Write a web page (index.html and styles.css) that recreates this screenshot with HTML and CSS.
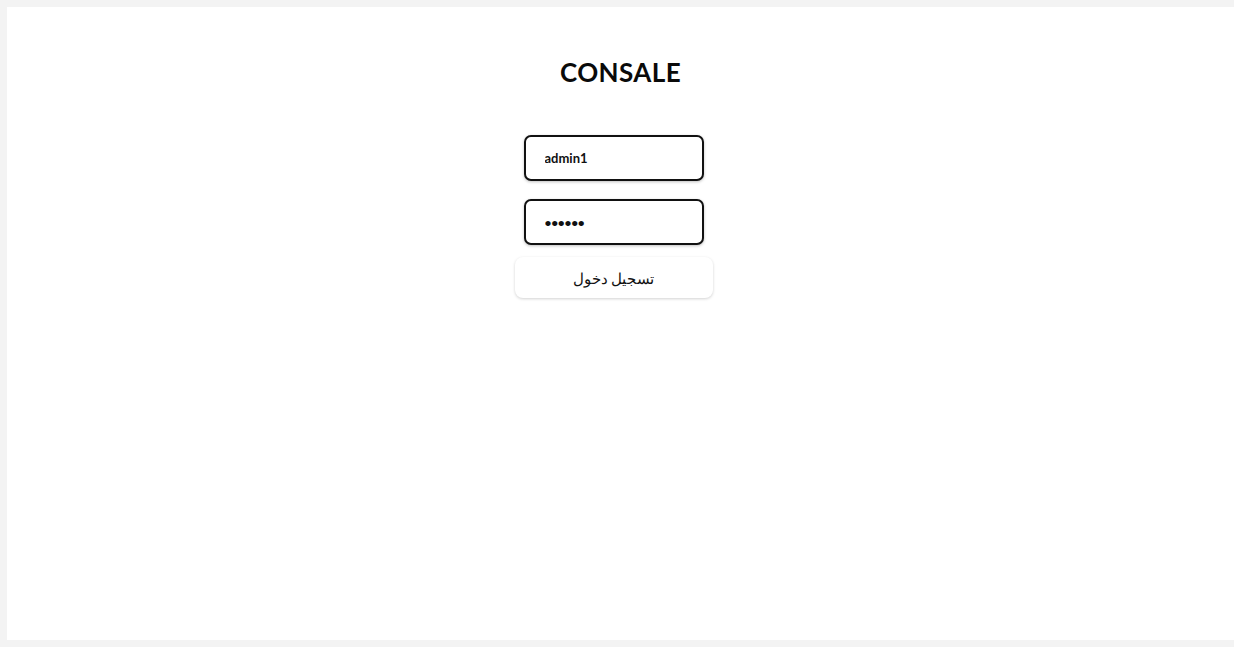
FILE: index.html
```html
<!DOCTYPE html>
<html lang="ar">
<head>
<meta charset="utf-8">
<title>CONSALE</title>
<link rel="stylesheet" href="styles.css">
</head>
<body>
<main class="panel">
  <h1 class="title">CONSALE</h1>
  <form class="login">
    <input class="field" type="text" value="admin1">
    <input class="field pass" type="password" value="123456">
    <button class="btn" type="button">تسجيل دخول</button>
  </form>
</main>
</body>
</html>
```

FILE: styles.css
```css
html, body {
  margin: 0;
  padding: 0;
}
body {
  background: #f3f3f3;
  padding: 7px 0 7px 7px;
  font-family: "Lato", "Noto Sans", sans-serif;
}
.panel {
  background: #ffffff;
  height: 633px;
  display: flex;
  flex-direction: column;
  align-items: center;
}
.title {
  margin: 49px 0 0;
  font-family: "Lato", sans-serif;
  font-weight: 700;
  font-size: 26px;
  line-height: 32px;
  color: #0a0a0a;
  letter-spacing: 0.4px;
}
.login {
  margin: 47px 14px 0 0;
  display: flex;
  flex-direction: column;
  align-items: center;
}
.field {
  box-sizing: border-box;
  width: 180px;
  height: 46px;
  border: 2.5px solid #111;
  border-radius: 7px;
  padding: 0 19px;
  font-family: "Lato", sans-serif;
  font-weight: 700;
  font-size: 13px;
  color: #111;
  background: #fff;
  box-shadow: 0 1px 3px rgba(0,0,0,0.25);
  outline: none;
  margin-bottom: 18px;
}
.pass {
  margin-bottom: 12px;
  font-size: 12px;
  letter-spacing: -0.3px;
}
.btn {
  width: 198px;
  height: 41px;
  border: none;
  border-radius: 8px;
  background: #fff;
  box-shadow: 0 1px 3px rgba(0,0,0,0.18);
  font-family: "Noto Sans", sans-serif;
  font-weight: 500;
  font-size: 14.5px;
  color: #111;
  cursor: pointer;
}
```
